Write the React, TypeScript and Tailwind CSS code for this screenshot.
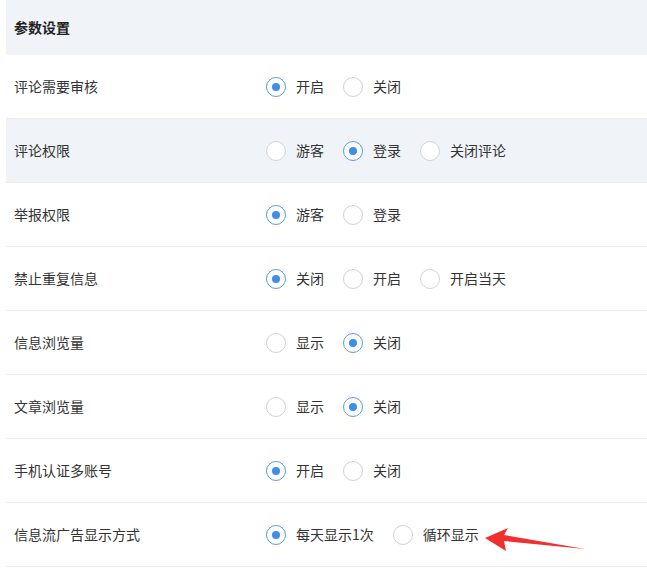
import React from "react";

type Row = { label: string; options: string[]; checked: number; gray?: boolean; arrow?: boolean };

const rows: Row[] = [
  { label: "评论需要审核", options: ["开启", "关闭"], checked: 0 },
  { label: "评论权限", options: ["游客", "登录", "关闭评论"], checked: 1, gray: true },
  { label: "举报权限", options: ["游客", "登录"], checked: 0 },
  { label: "禁止重复信息", options: ["关闭", "开启", "开启当天"], checked: 0 },
  { label: "信息浏览量", options: ["显示", "关闭"], checked: 1 },
  { label: "文章浏览量", options: ["显示", "关闭"], checked: 1 },
  { label: "手机认证多账号", options: ["开启", "关闭"], checked: 0 },
  { label: "信息流广告显示方式", options: ["每天显示1次", "循环显示"], checked: 0, arrow: true },
];

function Radio({ on }: { on: boolean }) {
  return (
    <span
      className={
        on
          ? "w-5 h-5 rounded-full border border-[#5a9ae6] bg-white flex items-center justify-center shrink-0"
          : "w-5 h-5 rounded-full border border-[#d2d2d2] bg-white shrink-0"
      }
    >
      {on && <span className="w-2 h-2 rounded-full bg-[#3d8ee6]" />}
    </span>
  );
}

export default function App() {
  return (
    <div
      className="w-[647px] h-[583px] bg-white overflow-hidden text-[14px] text-[#333]"
      style={{ fontFamily: '"Microsoft YaHei", "Noto Sans CJK SC", sans-serif' }}
    >
      <div className="ml-[6px]">
        <div className="h-[55px] bg-[#f0f3f7] flex items-center pl-2 font-bold text-[#222]">参数设置</div>
        {rows.map((r, i) => (
          <div
            key={i}
            className={`h-[64px] flex items-center border-b border-[#ebebeb] ${r.gray ? "bg-[#f0f3f7]" : "bg-white"}`}
          >
            <div className="w-[260px] pl-2 shrink-0">{r.label}</div>
            <div className="flex items-center gap-[19px]">
              {r.options.map((o, j) => (
                <label key={j} className="flex items-center gap-[10px]">
                  <Radio on={j === r.checked} />
                  <span>{o}</span>
                </label>
              ))}
            </div>
            {r.arrow && (
              <svg width="110" height="26" viewBox="0 0 110 26" className="ml-[4px] mt-[10px]">
                <polygon points="2,11 25,1 21,8 102,22 21,14 23,24" fill="#f0302e" />
              </svg>
            )}
          </div>
        ))}
      </div>
    </div>
  );
}
